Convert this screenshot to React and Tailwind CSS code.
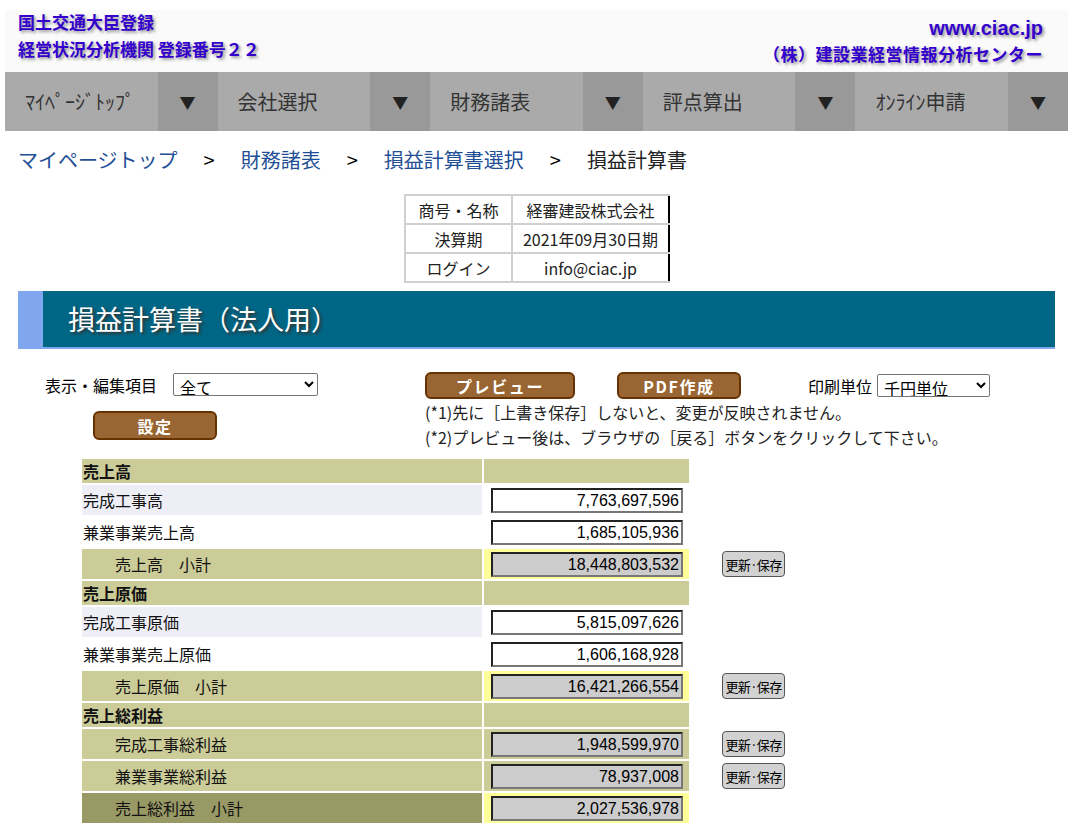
const jp = { fontFamily: '"Noto Sans CJK JP", "Liberation Sans", sans-serif' }
const num = { fontFamily: '"Liberation Sans", Arial, sans-serif' }

const navItems = ['ﾏｲﾍﾟｰｼﾞﾄｯﾌﾟ', '会社選択', '財務諸表', '評点算出', 'ｵﾝﾗｲﾝ申請']

const rows = [
  { type: 'head', label: '売上高' },
  { type: 'data', label: '完成工事高', value: '7,763,697,596', shade: true },
  { type: 'data', label: '兼業事業売上高', value: '1,685,105,936' },
  { type: 'sub', label: '売上高　小計', value: '18,448,803,532', save: true },
  { type: 'head', label: '売上原価' },
  { type: 'data', label: '完成工事原価', value: '5,815,097,626', shade: true },
  { type: 'data', label: '兼業事業売上原価', value: '1,606,168,928' },
  { type: 'sub', label: '売上原価　小計', value: '16,421,266,554', save: true },
  { type: 'head', label: '売上総利益' },
  { type: 'calc', label: '完成工事総利益', value: '1,948,599,970', save: true },
  { type: 'calc', label: '兼業事業総利益', value: '78,937,008', save: true },
  { type: 'total', label: '売上総利益　小計', value: '2,027,536,978' },
]

const BrownButton = ({ children, className }) => (
  <button className={`h-[27px] rounded-[6px] border-2 border-[#663300] bg-[#996633] text-[16px] font-bold text-white tracking-widest leading-none ${className}`}>
    {children}
  </button>
)

const NumBox = ({ value, gray }) => (
  <div
    style={num}
    className={`w-[192px] h-[25px] border-2 border-t-[#222] border-l-[#222] border-b-[#777] border-r-[#777] text-right pr-[2px] text-[16px] leading-[21px] text-black ${gray ? 'bg-[#cccccc]' : 'bg-white'}`}>
    {value}
  </div>
)

const Row = ({ row }) => {
  const isHead = row.type === 'head'
  const leftBg = {
    head: 'bg-[#cccc99]',
    data: row.shade ? 'bg-[#eeeef6]' : 'bg-white',
    sub: 'bg-[#cccc99]',
    calc: 'bg-[#cccc99]',
    total: 'bg-[#999966]',
  }[row.type]
  const rightBg = {
    head: 'bg-[#cccc99]',
    data: 'bg-white',
    sub: 'bg-[#ffff99]',
    calc: 'bg-[#cccc99]',
    total: 'bg-[#ffff99]',
  }[row.type]
  const h = isHead ? 'h-[24px]' : 'h-[30px]'
  const indent = row.type === 'head' || row.type === 'data' ? 'pl-[1px]' : 'pl-[33px]'
  return (
    <div className="flex gap-[2px]">
      <div className={`w-[400px] ${h} ${leftBg} ${indent} flex items-center text-[16px] text-[#111] ${isHead ? 'font-bold' : ''}`}>
        {row.label}
      </div>
      <div className={`w-[205px] ${h} ${rightBg} flex items-center pl-[7px]`}>
        {!isHead && <NumBox value={row.value} gray={row.type !== 'data'} />}
      </div>
      {row.save && (
        <div className="flex items-center pl-[31px]">
          <button className="h-[26px] w-[63px] rounded-[4px] border border-[#555] bg-[#d2d2d2] text-[13px] text-black leading-none tracking-tighter whitespace-nowrap">
            更新·保存
          </button>
        </div>
      )}
    </div>
  )
}

export default function App() {
  return (
    <div style={jp} className="w-[1079px] min-h-[824px] bg-white text-black pb-2">
      {/* header */}
      <div className="ml-[5px] w-[1063px] mt-[10px] h-[62px] bg-[#fafafa] flex justify-between pl-[13px] pr-[25px] font-bold text-[#3300cc] [text-shadow:2px_2px_3px_#999]">
        <div className="flex flex-col pt-[1px]">
          <span className="text-[17px] leading-[22px]">国土交通大臣登録</span>
          <span className="text-[17px] leading-[32px]">経営状況分析機関 登録番号２２</span>
        </div>
        <div className="flex flex-col items-end pt-[6px]">
          <span style={num} className="text-[20px] leading-[24px]">www.ciac.jp</span>
          <span className="text-[17px] leading-[27px] tracking-[0.5px]">（株）建設業経営情報分析センター</span>
        </div>
      </div>

      {/* nav */}
      <div className="ml-[5px] w-[1063px] h-[59px] grid grid-cols-5">
        {navItems.map((item) => (
          <div key={item} className="flex">
            <div className="flex-1 bg-[#aaaaaa] flex items-center pl-[20px] text-[20px] text-[#333]">{item}</div>
            <div className="w-[60px] bg-[#999999] flex items-center justify-center text-[16px] text-[#222]">▼</div>
          </div>
        ))}
      </div>

      {/* breadcrumb */}
      <div className="mx-[18px] h-[58px] flex items-center text-[20px]">
        <span className="text-[#1f4f96]">マイページトップ</span>
        <span className="mx-[26px] text-black">&gt;</span>
        <span className="text-[#1f4f96]">財務諸表</span>
        <span className="mx-[26px] text-black">&gt;</span>
        <span className="text-[#1f4f96]">損益計算書選択</span>
        <span className="mx-[26px] text-black">&gt;</span>
        <span className="text-[#222]">損益計算書</span>
      </div>

      {/* info table */}
      <div className="flex pl-[404px] pt-[5px]">
        <table className="border-collapse text-[16px] text-[#222] border-r-2 border-r-black">
          <tbody>
            {[
              ['商号・名称', '経審建設株式会社'],
              ['決算期', '2021年09月30日期'],
              ['ログイン', 'info@ciac.jp'],
            ].map(([k, v]) => (
              <tr key={k} className="h-[29px]">
                <td className="w-[107px] border-2 border-[#d0d0d0] text-center">{k}</td>
                <td className="w-[157px] border-2 border-[#d0d0d0] border-r-0 text-center whitespace-nowrap">{v}</td>
              </tr>
            ))}
          </tbody>
        </table>
      </div>

      {/* title bar */}
      <div className="ml-[18px] w-[1037px] mt-[8px] h-[58px] flex border-b-2 border-[#7fa6ef]">
        <div className="w-[25px] bg-[#7fa6ef]" />
        <div className="flex-1 bg-[#006685] flex items-center pl-[25px] text-[27px] text-white [text-shadow:2px_2px_3px_#333]">
          損益計算書（法人用）
        </div>
      </div>

      {/* controls */}
      <div className="flex pt-[23px] h-[110px]">
        <div className="w-[425px] pl-[45px]">
          <div className="flex items-center h-[25px]">
            <span className="text-[16px] w-[128px]">表示・編集項目</span>
            <select className="w-[145px] h-[23px] border border-[#767676] rounded-[2px] text-[16px] leading-[19px] bg-white px-[2px]">
              <option>全て</option>
            </select>
          </div>
          <BrownButton className="w-[124px] h-[29px] ml-[48px] mt-[14px]">設定</BrownButton>
        </div>
        <div className="flex flex-col">
          <div className="flex items-center h-[27px]">
            <BrownButton className="w-[150px]">プレビュー</BrownButton>
            <BrownButton className="w-[124px] ml-[42px]">PDF作成</BrownButton>
            <span className="ml-[67px] text-[16px] whitespace-nowrap">印刷単位</span>
            <select className="ml-[5px] w-[113px] h-[23px] border border-[#767676] rounded-[2px] text-[16px] leading-[19px] bg-white px-[2px]">
              <option>千円単位</option>
            </select>
          </div>
          <div className="text-[16px] leading-[25px] text-[#222] mt-[1px]">
            <div>(*1)先に［上書き保存］しないと、変更が反映されません。</div>
            <div>(*2)プレビュー後は、ブラウザの［戻る］ボタンをクリックして下さい。</div>
          </div>
        </div>
      </div>

      {/* data table */}
      <div className="pl-[82px] flex flex-col gap-[2px]">
        {rows.map((r) => (
          <Row key={r.label} row={r} />
        ))}
      </div>
    </div>
  )
}
